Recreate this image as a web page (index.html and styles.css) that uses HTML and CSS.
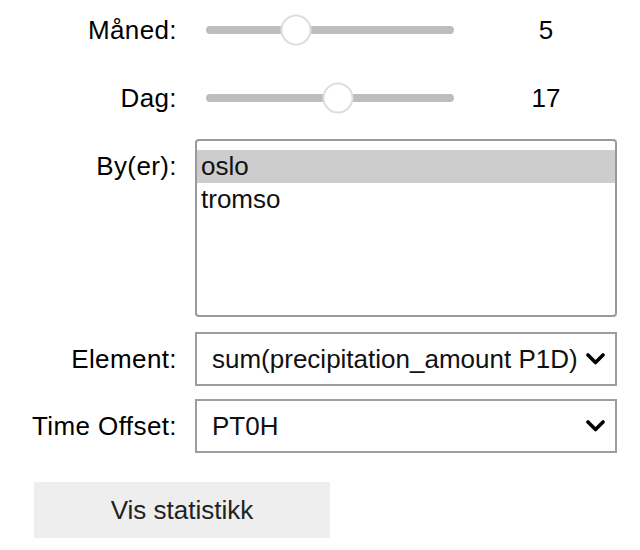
FILE: index.html
```html
<!DOCTYPE html>
<html lang="no">
<head>
<meta charset="utf-8">
<title>Statistikk</title>
<link rel="stylesheet" href="styles.css">
</head>
<body>
<div class="form">
  <div class="row row-slider">
    <label class="label">Måned:</label>
    <div class="slider">
      <div class="track">
        <div class="thumb" style="left: 36.36%"></div>
      </div>
    </div>
    <div class="readout">5</div>
  </div>
  <div class="row row-slider">
    <label class="label">Dag:</label>
    <div class="slider">
      <div class="track">
        <div class="thumb" style="left: 53.33%"></div>
      </div>
    </div>
    <div class="readout">17</div>
  </div>
  <div class="row row-select">
    <label class="label label-top">By(er):</label>
    <div class="listbox">
      <div class="option selected">oslo</div>
      <div class="option">tromso</div>
    </div>
  </div>
  <div class="row row-dropdown first-dropdown">
    <label class="label">Element:</label>
    <div class="dropdown">
      <span class="dropdown-text">sum(precipitation_amount P1D)</span>
      <svg class="chevron" width="19" height="12" viewBox="0 0 19 12"><path d="M2 2 L9.5 9.5 L17 2" fill="none" stroke="#000" stroke-width="3.6" stroke-linecap="round" stroke-linejoin="round"/></svg>
    </div>
  </div>
  <div class="row row-dropdown">
    <label class="label">Time Offset:</label>
    <div class="dropdown">
      <span class="dropdown-text">PT0H</span>
      <svg class="chevron" width="19" height="12" viewBox="0 0 19 12"><path d="M2 2 L9.5 9.5 L17 2" fill="none" stroke="#000" stroke-width="3.6" stroke-linecap="round" stroke-linejoin="round"/></svg>
    </div>
  </div>
  <div class="row row-button">
    <button class="button">Vis statistikk</button>
  </div>
</div>
</body>
</html>
```

FILE: styles.css
```css
html, body {
  margin: 0;
  padding: 0;
  background: #ffffff;
}

body {
  font-family: "Liberation Sans", Arial, Helvetica, sans-serif;
  font-size: 26px;
  color: #000000;
}

.form {
  display: flex;
  flex-direction: column;
  padding-top: 2px;
}

.row {
  display: flex;
  align-items: center;
}

.label {
  flex: none;
  width: 177px;
  margin-right: 18px;
  text-align: right;
  line-height: 33px;
  white-space: nowrap;
  letter-spacing: 0.4px;
}

.row-slider {
  height: 56px;
}

.row-slider + .row-slider {
  margin-top: 12px;
}

.slider {
  flex: none;
  width: 248px;
  padding: 0 11px;
  height: 56px;
  display: flex;
  align-items: center;
}

.track {
  position: relative;
  width: 100%;
  height: 8px;
  border-radius: 4px;
  background: #bdbdbd;
}

.thumb {
  position: absolute;
  top: 50%;
  width: 31px;
  height: 31px;
  box-sizing: border-box;
  border: 2px solid #dedede;
  border-radius: 50%;
  background: #ffffff;
  transform: translate(-50%, -50%);
}

.readout {
  flex: none;
  width: 92px;
  margin-left: 35px;
  text-align: center;
  line-height: 33px;
}

.row-select {
  align-items: flex-start;
  margin-top: 13px;
}

.label-top {
  margin-top: 11px;
}

.listbox {
  flex: none;
  width: 422px;
  height: 178px;
  box-sizing: border-box;
  border: 2px solid #9a9a9a;
  border-radius: 4px;
  padding-top: 9px;
  overflow: hidden;
}

.option {
  height: 33px;
  line-height: 33px;
  padding-left: 4px;
  color: #111111;
}

.option.selected {
  background: #cdcdcd;
}

.row-dropdown {
  margin-top: 13px;
}

.first-dropdown {
  margin-top: 15px;
}

.dropdown {
  flex: none;
  width: 422px;
  height: 54px;
  box-sizing: border-box;
  border: 2px solid #9e9e9e;
  padding: 0 10px 0 15px;
  display: flex;
  align-items: center;
  justify-content: space-between;
  color: #111111;
}

.dropdown-text {
  white-space: nowrap;
  overflow: hidden;
}

.chevron {
  flex: none;
  margin-left: 6px;
}

.row-button {
  margin-top: 29px;
  padding-left: 34px;
}

.button {
  width: 296px;
  height: 56px;
  border: none;
  background: #eeeeee;
  color: #222222;
  font-family: inherit;
  font-size: 26px;
  padding: 0;
}
```
